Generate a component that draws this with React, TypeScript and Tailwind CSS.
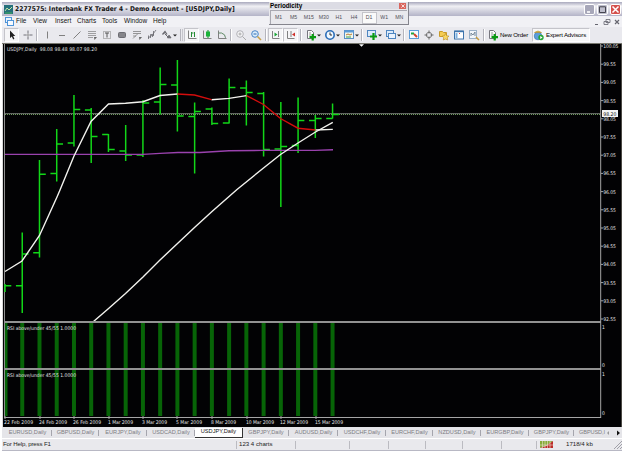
import React, { type ReactNode } from "react";

type Bar = [high: number, low: number, open: number, close: number];

const BAR_STEP = 17.24;
const barX = (i: number) => 5 + i * BAR_STEP;

const bars: Bar[] = [
  [284, 292, 285.7, 285.7],
  [232.5, 313, 285.7, 254],
  [160, 257.5, 252.7, 174.3],
  [129, 181.5, 173.5, 144],
  [95, 146.5, 143, 109.5],
  [108, 163, 110, 136.5],
  [134, 152, 134.5, 149.5],
  [125, 161, 151, 155],
  [100, 157, 155, 103],
  [67.5, 114.5, 102, 84.5],
  [60, 131.5, 85, 116],
  [102.5, 173.5, 116.5, 111.5],
  [107.5, 125, 109, 123.5],
  [78.5, 123.5, 123, 87.5],
  [80.5, 125.5, 88, 92.5],
  [92, 156.5, 93.5, 149.5],
  [102, 207, 149, 146.5],
  [97.5, 153, 145.5, 120.5],
  [115, 138, 120.5, 118.5],
  [103.5, 118.5, 118.5, 114.5],
];

const prices = [
  "100.05", "99.55", "99.05", "98.55", "98.05", "97.55", "97.05", "96.55",
  "96.05", "95.55", "95.05", "94.55", "94.05", "93.55", "93.05", "92.55",
];

const dates = [
  { x: 4, label: "22 Feb 2009", w: 29 },
  { x: 39, label: "24 Feb 2009", w: 28 },
  { x: 73, label: "26 Feb 2009", w: 28 },
  { x: 108, label: "1 Mar 2009", w: 25 },
  { x: 142, label: "3 Mar 2009", w: 25 },
  { x: 176, label: "5 Mar 2009", w: 26 },
  { x: 211, label: "8 Mar 2009", w: 25 },
  { x: 246, label: "10 Mar 2009", w: 28 },
  { x: 280, label: "12 Mar 2009", w: 28 },
  { x: 315, label: "15 Mar 2009", w: 28 },
];

const tabs = [
  { label: "EURUSD,Daily", cls: "w-[49px]" },
  { label: "GBPUSD,Daily", cls: "w-[47px]" },
  { label: "EURJPY,Daily", cls: "w-[48px]" },
  { label: "USDCAD,Daily", cls: "w-[48px]" },
  { label: "USDJPY,Daily", cls: "w-[48px]", active: true },
  { label: "GBPJPY,Daily", cls: "w-[46px]" },
  { label: "AUDUSD,Daily", cls: "w-[49px]" },
  { label: "USDCHF,Daily", cls: "w-[48px]" },
  { label: "EURCHF,Daily", cls: "w-[47px]" },
  { label: "NZDUSD,Daily", cls: "w-[48px]" },
  { label: "EURGBP,Daily", cls: "w-[48px]" },
  { label: "GBPJPY,Daily", cls: "w-[45px]" },
];

const periods = ["M1", "M5", "M15", "M30", "H1", "H4", "D1", "W1", "MN"];

const Icon = ({ children }: { children: ReactNode }) => (
  <svg
    viewBox="0 0 12 12"
    className="h-3 w-3 shrink-0"
    fill="none"
    stroke="#808080"
    strokeWidth="1"
  >
    {children}
  </svg>
);

const Tool = ({
  children,
  pressed,
  caret,
}: {
  children: ReactNode;
  pressed?: boolean;
  caret?: boolean;
}) => (
  <div
    className={`flex h-[14px] shrink-0 items-center justify-center ${
      caret ? "w-[19px]" : "w-[15px]"
    } ${pressed ? "border border-[#c4c4ca] border-r-white border-b-white bg-[#f5f5f7]" : ""}`}
  >
    <Icon>{children}</Icon>
    {caret && (
      <svg viewBox="0 0 4 3" className="h-[3px] w-1 shrink-0">
        <path d="M0 0.4h4L2 2.6z" fill="#222" />
      </svg>
    )}
  </div>
);

const Separator = ({ narrow }: { narrow?: boolean }) => (
  <div className={`flex h-[12px] shrink-0 justify-center ${narrow ? "w-1" : "w-[5px]"}`}>
    <div className="w-px bg-[#b4b4bc]" />
    <div className="w-px bg-white" />
  </div>
);

const PlusDoc = () => (
  <>
    <path d="M2.5 1.5h4l2 2v6h-6z" fill="#fafafa" stroke="#77777f" />
    <path d="M4 4h2M4 6h2" stroke="#999" />
    <path d="M7.7 5v6.5M4.5 8.2h6.5" stroke="#0a9a12" strokeWidth="2.2" />
  </>
);

const Toolbar = () => (
  <div className="flex h-4 items-center bg-[#e9e9ee] pl-[2px]">
    <Tool pressed>
      <path d="M4 1.5v7.5l1.8-1.6 1.4 3 1.2-.6-1.3-2.8h2.2z" fill="#222" stroke="none" />
    </Tool>
    <div className="w-px shrink-0" />
    <Tool>
      <path d="M6 1.5v3M6 7.5v3M1.5 6h3M7.5 6h3" stroke="#707078" />
      <path d="M4.5 6h3M6 4.5v3" stroke="#999" />
    </Tool>
    <Separator narrow />
    <Tool><path d="M6.5 2.5v7" /></Tool>
    <Tool><path d="M3 6.5h6" /></Tool>
    <Tool><path d="M2.5 9.5l7-7" /></Tool>
    <Tool>
      <path d="M2 2.5h8M2 4.5h8M2 6.5h8M2 8.5h5" strokeWidth=".7" />
      <path d="M8 8h3L8.5 11z" fill="#666" stroke="none" />
    </Tool>
    <Tool>
      <path d="M2.5 2.5h7v7h-7z" strokeDasharray="1 1" />
      <path d="M4 4h4M6 4v4.5" stroke="#555" />
    </Tool>
    <Tool><rect x="2.5" y="3.5" width="7" height="5" rx="1" fill="#85858a" stroke="#6c6c72" /></Tool>
    <Tool>
      <path d="M2 2.5h8M2 4.5h8M2 9.5l5-5M2 7h3" strokeWidth=".8" />
      <path d="M8 8h3L8.5 11z" fill="#666" stroke="none" />
    </Tool>
    <Tool>
      <path d="M2.5 10V6.5M4.5 9V5.5h2V8M7.5 7V2M10 1L7 5M2 9l6-4" strokeWidth=".8" stroke="#66666c" />
    </Tool>
    <Tool caret>
      <path d="M1.5 5.5L4 2.5l2 3" strokeWidth="1.3" stroke="#66666c" />
      <path d="M3.5 4.5l4 4M6.5 8.8h3.5L8 6.2z" fill="#66666c" strokeWidth="1" stroke="#66666c" />
    </Tool>
    <div className="flex h-[12px] w-[6px] shrink-0 justify-center gap-px">
      <div className="w-px bg-[#b4b4bc]" />
      <div className="w-px bg-[#c6c6cc]" />
    </div>
    <Tool pressed>
      <path d="M2.5 1.5v8h8" />
      <path d="M5.5 3v5M5.5 4h2M8.5 3v5" stroke="#258c35" />
    </Tool>
    <Tool>
      <path d="M2.5 1.5v8h8" />
      <path d="M7 1v8" stroke="#108a28" />
      <rect x="5" y="2.5" width="4" height="5" fill="#19b238" stroke="none" />
    </Tool>
    <Tool>
      <path d="M2.5 1.5v8h8" />
      <path d="M2.5 4l3 0 3 1.8 1 3" stroke="#5f8a66" />
    </Tool>
    <Separator narrow />
    <Tool>
      <circle cx="5" cy="5" r="3.3" stroke="#b1b1b7" fill="#f5f5f7" />
      <path d="M3.5 5h3M5 3.5v3M7.5 7.5L11 11" stroke="#aaa" />
    </Tool>
    <Tool>
      <circle cx="5" cy="5" r="3.3" stroke="#4a86c8" fill="#d9ecfb" />
      <path d="M3.5 5h3" stroke="#2f69b0" />
      <path d="M7.5 7.5L11 11" stroke="#caa24a" strokeWidth="1.6" />
    </Tool>
    <Separator />
    <Tool pressed>
      <path d="M2.5 2v7.5h7M8.5 2v6" />
      <path d="M4.5 3.5l3 2-3 2z" fill="#18a535" stroke="none" />
    </Tool>
    <Tool pressed>
      <path d="M2.5 2v7.5h7M6 2v6" />
      <path d="M10 3.5l-3 2 3 2z" fill="#d0302a" stroke="none" />
    </Tool>
    <Separator />
    <Tool caret><PlusDoc /></Tool>
    <Tool caret>
      <circle cx="6" cy="6" r="4.2" fill="#eef7ff" stroke="#2a6db8" strokeWidth="1.6" />
      <path d="M6 3.5V6h2" stroke="#333" />
    </Tool>
    <Tool caret>
      <rect x="1.5" y="1.5" width="9" height="8" fill="#f3f7ec" stroke="#5a8fc6" />
      <path d="M1.5 2.5h9" stroke="#5a9bd8" strokeWidth="2" />
      <path d="M3 6l2-1 2 1 2-1" stroke="#b8772f" />
      <path d="M3 8h5" stroke="#38a04a" />
    </Tool>
    <Separator narrow />
    <Tool caret>
      <rect x="1.5" y="1.5" width="8" height="6" fill="#dbeafa" stroke="#4f86c0" />
      <path d="M7.5 4v7M4 7.5h7" stroke="#0a9a12" strokeWidth="2.2" />
    </Tool>
    <Tool caret>
      <rect x="1.5" y="1.5" width="7" height="6" fill="#dbeafa" stroke="#4f86c0" />
      <rect x="3.5" y="4.5" width="7" height="5" fill="#eaf3fd" stroke="#4f86c0" />
    </Tool>
    <Separator narrow />
    <Tool>
      <rect x="1.5" y="1.5" width="9" height="8" fill="#f7fbff" stroke="#5a9bd8" />
      <path d="M3 4.5h3" stroke="#20a540" strokeWidth="2" />
      <path d="M6 5l3 3" stroke="#d6452c" strokeWidth="2" />
    </Tool>
    <Tool>
      <circle cx="6" cy="6" r="2.7" />
      <path d="M6 1.5v3M6 7.5v3M1.5 6h3M7.5 6h3" stroke="#666" />
    </Tool>
    <Tool>
      <path d="M1.5 2.5h3l1 1h3v4h-7z" fill="#f5cd53" stroke="#c89a2a" />
      <path d="M7.5 4.5l1.2 2.3 2.3.3-1.7 1.6.4 2.3-2.2-1-2.2 1 .4-2.3L4 7.1l2.3-.3z" fill="#f9d863" stroke="#b98a20" strokeWidth=".6" />
    </Tool>
    <Tool>
      <rect x="1.5" y="2" width="9" height="8" fill="#fff" stroke="#3e74ac" />
      <path d="M2 2.5h8" stroke="#3e74ac" strokeWidth="1.4" />
      <path d="M3.5 4v5" stroke="#7fb0e0" strokeWidth="2" />
      <path d="M6 4.5h1" stroke="#d44" />
    </Tool>
    <Tool>
      <rect x="1.5" y="1.5" width="7" height="8" fill="#f2f6fb" stroke="#9ab0c8" />
      <path d="M3 7V4l2 2 2-3v4" stroke="#789" />
      <path d="M8 8l3 3" stroke="#c79b3c" strokeWidth="1.5" />
    </Tool>
    <Separator />
    <div className="flex w-[46px] shrink-0 items-center whitespace-nowrap pl-px text-[6.1px] tracking-[-0.15px] text-black">
      <Icon><PlusDoc /></Icon>
      <span className="pl-px">New Order</span>
    </div>
    <div className="flex h-[14px] w-[58px] shrink-0 items-center whitespace-nowrap border border-[#c4c4ca] border-r-white border-b-white bg-[#f7f7f9] text-[6.1px] tracking-[-0.15px] text-black">
      <Icon>
        <circle cx="5" cy="7" r="3.8" fill="#5e9dd8" stroke="#2f70b0" strokeWidth=".6" />
        <path d="M1.5 3.5q3.5-3 7 0z" fill="#e8c34c" stroke="#b48a25" strokeWidth=".6" />
        <circle cx="8" cy="8.5" r="2.7" fill="#28a83a" stroke="none" />
        <path d="M7.2 7l2.4 1.5L7.2 10z" fill="#fff" stroke="none" />
      </Icon>
      <span className="pl-px">Expert Advisors</span>
    </div>
  </div>
);

const Chart = () => (
  <svg
    viewBox="2 43 620 384"
    className="block h-[384px] w-[620px]"
    fontFamily='"DejaVu Sans Condensed", "DejaVu Sans", sans-serif'
    fontSize="5"
    fill="#e4e4e4"
  >
    <rect x="2" y="43" width="620" height="384" fill="#020204" />
    <path d="M2.5 43v384" stroke="#d8d8d8" />
    <path d="M4.5 44v374" stroke="#8e8e8e" />
    <path d="M2 43.5h620" stroke="#77776f" />
    <path d="M621.5 44v383" stroke="#4a4843" />
    <path d="M359 44.2h5l-2.5 2.6z" fill="#fff" />

    <path d="M5 113.6h596" stroke="#6c706c" />
    <path d="M5 114.5h596" stroke="#6f9a60" strokeDasharray="1 1" />

    <g stroke="#12d618" strokeWidth="1.5">
      {bars.map(([high, low, open, close], i) => (
        <path
          key={i}
          d={`M${barX(i)} ${high}V${low}M${barX(i) - (i ? 6.3 : 0)} ${open}h${i ? 6.3 : 0}M${barX(i)} ${close}h6.3`}
        />
      ))}
    </g>

    <path
      d="M5 154.4H143L160 153.4 178 152.5H200L229 150.8 263 150.4H315L333 149.7"
      fill="none"
      stroke="#9a42ae"
      strokeWidth="1.4"
    />
    <g fill="none" stroke="#f2f2ee" strokeWidth="1.4">
      <path d="M5 271.5L22 261 39.5 235.5 57 197 60 190 74 156 91 121.5 108.5 104 125.5 103.3 143 101.7 160 95.5 177.5 94" />
      <path d="M211.5 99.7L229 98.4 246.5 95.6" />
      <path d="M315.5 130L332.8 129.4" />
      <path d="M93.5 321.5L108 309 125.5 293.5 143 277 160 260 177.5 243.5 194.5 227.5 212 211.5 237 189.5 263.5 168 280.5 154.5 298 143 315.5 132 332.8 122.3" />
    </g>
    <g fill="none" stroke="#d40d0d" strokeWidth="1.4">
      <path d="M177.5 94L194.5 95 211.5 99.7" />
      <path d="M246.5 95.6L263.5 104.5 280.5 118.5 298 128.2 315.5 130" />
    </g>

    <g fill="#076407">
      {bars.map((_, i) => (
        <g key={i}>
          <rect x={barX(i) - (i ? 2 : 0)} y="323" width={i ? 4 : 2.5} height="45" />
          <rect x={barX(i) - (i ? 2 : 0)} y="370" width={i ? 4 : 2.5} height="46" />
        </g>
      ))}
    </g>
    <path d="M4 322h597M4 369h597" stroke="#929292" strokeWidth="2" />
    <path d="M4 417.5h597" stroke="#a6a6a6" />
    <path d="M600.7 44v374" stroke="#a6a6a6" />

    <text x="7" y="50.6" textLength="90" xmlSpace="preserve">
      {"USDJPY,Daily  98.08 98.48 98.07 98.20"}
    </text>
    <text x="7" y="330" textLength="69">RSI above/under 45/55 1.0000</text>
    <text x="7" y="377" textLength="69">RSI above/under 45/55 1.0000</text>

    {prices.map((price, i) => (
      <g key={price}>
        <path d={`M601 ${46 + i * 18.2}h2`} stroke="#a6a6a6" />
        <text x="603.3" y={48 + i * 18.2} textLength={i ? 12.5 : 15}>
          {price}
        </text>
      </g>
    ))}
    <rect x="602" y="110" width="16" height="7" fill="#f4f4f4" />
    <text x="603.3" y="115.5" textLength="13" fill="#111">98.20</text>
    <text x="602" y="328.6">1</text>
    <text x="602" y="366.8">0</text>
    <text x="602" y="375.6">1</text>
    <text x="602" y="415.4">0</text>

    {dates.map(({ x, label, w }) => (
      <g key={label}>
        <path d={`M${x + 1} 416v3`} stroke="#a6a6a6" />
        <text x={x} y="424" textLength={w}>{label}</text>
      </g>
    ))}
  </svg>
);

const Periodicity = () => (
  <div className="absolute left-[269px] top-[2px] flex h-[23px] w-[140px] flex-col border-r border-b border-[#85858d] bg-[#e9e9ed]">
    <div className="flex h-[7px] items-center justify-between bg-[#dcdce4] pl-px pr-[2px]">
      <span className="text-[6.3px] font-bold leading-[7px] text-black">Periodicity</span>
      <div className="flex h-[6px] w-[7px] items-center justify-center bg-[#d9665e]">
        <svg viewBox="0 0 5 5" className="h-1 w-1" stroke="#fff">
          <path d="M.5 .5l4 4M4.5 .5l-4 4" />
        </svg>
      </div>
    </div>
    <div className="mx-px mt-px flex h-[14px] items-center border-t border-l border-[#a9a9b1]">
      {periods.map((p) => (
        <div
          key={p}
          className={`flex h-[12px] w-[15.1px] shrink-0 items-center justify-center text-[5.2px] text-[#505058] ${
            p === "D1" ? "border border-[#c4c4ca] bg-[#fafafa]" : ""
          }`}
        >
          {p}
        </div>
      ))}
    </div>
  </div>
);

const TitleBar = () => (
  <div className="flex h-[14px] items-center bg-linear-to-b from-[#a9a9bd] via-[#f0f0f4] via-30% to-[#b4b4c8] pl-[2px] pr-px">
    <svg viewBox="0 0 9 9" className="h-[9px] w-[9px]">
      <rect width="9" height="9" fill="#26717b" />
      <path d="M1 6l2-3 2 2 3-3" fill="none" stroke="#c6e6a5" />
      <path d="M1 8h7" stroke="#3fae5a" />
    </svg>
    <span className="whitespace-nowrap pl-[2px] font-['DejaVu_Sans_Condensed','DejaVu_Sans',sans-serif] text-[6.6px] font-bold tracking-[0.06px] text-[#111]">
      2277575: Interbank FX Trader 4 - Demo Account - [USDJPY,Daily]
    </span>
    <div className="ml-auto flex gap-[2px]">
      <div className="h-[11px] w-[11px] rounded-[2px] border border-white bg-[#a7a7b9]">
        <svg viewBox="0 0 9 9"><path d="M2 7h3" stroke="#fff" strokeWidth="1.6" /></svg>
      </div>
      <div className="h-[11px] w-[11px] rounded-[2px] border border-white bg-[#bfbfcd]">
        <svg viewBox="0 0 9 9"><path d="M1.5 1.8h6v5.7h-6z" fill="none" stroke="#44444e" /></svg>
      </div>
      <div className="h-[11px] w-[11px] rounded-[2px] border border-white bg-[#d4504c]">
        <svg viewBox="0 0 9 9"><path d="M1.5 1.5l6 6M7.5 1.5l-6 6" stroke="#fff" strokeWidth="1.5" /></svg>
      </div>
    </div>
  </div>
);

const MenuBar = () => (
  <div className="flex h-[11px] items-center bg-[#f1f1f5] pl-[3px] text-[6.5px] text-[#111]">
    <svg viewBox="0 0 9 9" className="h-[9px] w-[9px]">
      <rect x=".5" y=".5" width="6" height="5" fill="#eaf4ff" stroke="#4f94d8" />
      <rect x="2.5" y="3.5" width="6" height="5" fill="#f8fbff" stroke="#4f94d8" />
    </svg>
    <span className="w-[17px] pl-[2px]">File</span>
    <span className="w-[22px] pl-[2px]">View</span>
    <span className="w-[22px] pl-[2px]">Insert</span>
    <span className="w-[25px] pl-[2px]">Charts</span>
    <span className="w-[22px] pl-[2px]">Tools</span>
    <span className="w-[30px] pl-[2px]">Window</span>
    <span className="pl-px">Help</span>
    <svg viewBox="0 0 28 8" className="ml-auto mr-px h-2 w-7" fill="none" stroke="#666670">
      <path d="M2 6.5h3" />
      <path d="M13 1.5h4v3h-4zM11 3.5h4v3h-4z" strokeWidth=".8" />
      <path d="M22 2l4 4M26 2l-4 4" strokeWidth="1.2" />
    </svg>
  </div>
);

const ChartTabs = () => (
  <div className="flex h-[11px] items-center bg-[#e5e5e9] pl-px text-[5.6px] text-[#7c7c82]">
    {tabs.map(({ label, cls, active }, i) => (
      <div
        key={i}
        className={`flex h-[10px] shrink-0 items-center justify-center whitespace-nowrap ${cls} ${
          active
            ? "border-r border-b border-[#333] bg-white text-[#111]"
            : "bg-[linear-gradient(#a5a5ad,#a5a5ad)] bg-[length:1px_6px] bg-[position:right_center] bg-no-repeat"
        }`}
      >
        {label}
      </div>
    ))}
    <div className="w-[31px] shrink-0 whitespace-nowrap pl-[5px] tracking-[-0.1px]">GBPUSD,I</div>
    <svg viewBox="0 0 16 6" className="h-[6px] w-4 shrink-0">
      <path d="M4 1v4L2 3z" fill="#999" />
      <path d="M12 .5v5L15 3z" fill="#111" />
    </svg>
  </div>
);

const StatusBar = () => (
  <div className="flex h-[13px] items-center border-t border-white border-b border-b-[#b8b8c4] bg-[#e9e9ed] pl-px text-[6.1px] text-[#222]">
    <span className="w-[233px] tracking-[-0.15px]">For Help, press F1</span>
    <div className="flex h-2 w-[59px] items-center border-l border-[#bbbbc1] pl-[2px]">123 4 charts</div>
    <div className="h-2 w-[54px] border-l border-[#bbbbc1]" />
    <div className="h-2 w-[39px] border-l border-[#bbbbc1]" />
    <div className="h-2 w-[37px] border-l border-[#bbbbc1]" />
    <div className="h-2 w-[37px] border-l border-[#bbbbc1]" />
    <div className="h-2 w-[39px] border-l border-[#bbbbc1]" />
    <div className="h-2 w-[35px] border-l border-[#bbbbc1]" />
    <div className="flex h-2 items-center border-l border-[#bbbbc1] pl-[3px]">
      <svg viewBox="0 0 13 7" className="h-[7px] w-[13px]">
        <path d="M0 0h13L7 4 0 7z" fill="#86ac38" />
        <path d="M0 7l6-2 7-5v7z" fill="#bc2c2a" />
        <path d="M2.5 0v7M5 0v7M7.5 0v7M10 0v7M0 4h13" stroke="#ede2d0" strokeWidth=".6" />
      </svg>
    </div>
    <span className="whitespace-nowrap pl-[13px]">1718/4 kb</span>
    <svg viewBox="0 0 8 8" className="ml-auto h-2 w-2" stroke="#a0a0a8">
      <path d="M0 8l8-8M3 8l5-5M6 8l2-2" />
    </svg>
  </div>
);

export default function App() {
  return (
    <div className="h-[452px] w-[625px] overflow-hidden bg-white pt-[2px] pl-[2px] font-['Liberation_Sans',sans-serif] leading-none">
      <div className="w-[620px]">
        <TitleBar />
        <MenuBar />
        <Toolbar />
        <Chart />
        <ChartTabs />
        <StatusBar />
      </div>
      <Periodicity />
    </div>
  );
}
